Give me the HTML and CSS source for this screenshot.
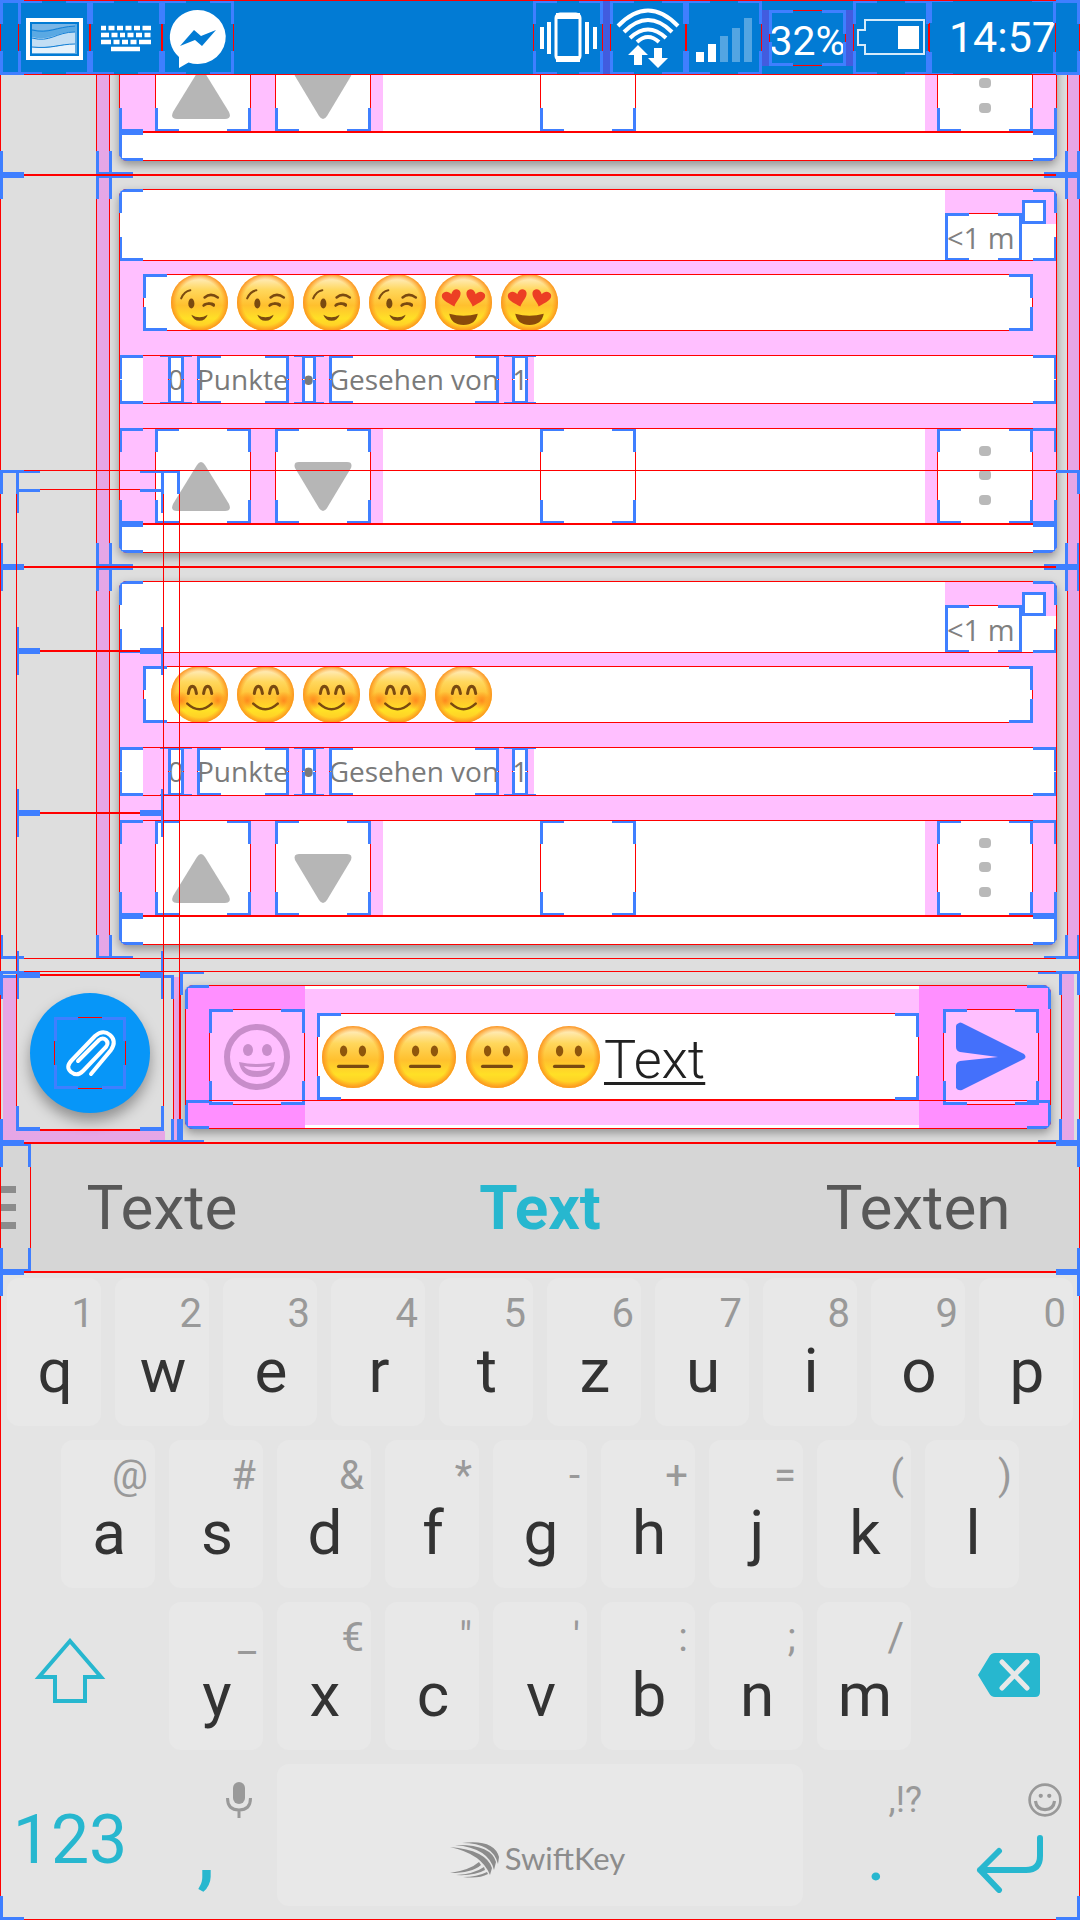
FILE: index.html
```html
<!DOCTYPE html>
<html lang="de">
<head>
<meta charset="utf-8">
<meta name="viewport" content="width=device-width, initial-scale=1">
<title>Chat</title>
<link rel="stylesheet" href="styles.css">
</head>
<body>
<svg class="sprite" aria-hidden="true">
  <defs>
    <linearGradient id="skin" x1="0" y1="0" x2="0" y2="1">
      <stop offset="0" stop-color="#fff3dc"/><stop offset=".28" stop-color="#ffd75c"/>
      <stop offset=".55" stop-color="#ffc02e"/><stop offset=".78" stop-color="#ffe026"/><stop offset="1" stop-color="#ffc526"/>
    </linearGradient>
    <radialGradient id="rim"><stop offset=".8" stop-color="#ff9a1e" stop-opacity="0"/><stop offset="1" stop-color="#fb9420"/></radialGradient>
    <radialGradient id="blush"><stop offset="0" stop-color="#ff7a1a" stop-opacity=".8"/><stop offset="1" stop-color="#ff7a1a" stop-opacity="0"/></radialGradient>
    <symbol id="face" viewBox="0 0 56 56"><circle cx="28" cy="28" r="28" fill="url(#skin)"/><circle cx="28" cy="28" r="28" fill="url(#rim)"/></symbol>
    <symbol id="wink" viewBox="0 0 56 56">
      <use href="#face"/>
      <g fill="none" stroke="#7a4a10" stroke-linecap="round"><path d="M10 24q3-7 9-8" stroke-width="2"/><path d="M33 23q6-5 13 0" stroke-width="2.500"/><path d="M32 31q5-4 10 0M33 30q6-2 9 0" stroke-width="2.500"/></g>
      <ellipse cx="20" cy="29" rx="3" ry="5" fill="#7a4a10"/>
      <path d="M20 40q8 5 16 0q-2 6-8 6t-8-6z" fill="#7a4a10"/>
    </symbol>
    <symbol id="hearts" viewBox="0 0 56 56">
      <use href="#face"/>
      <g fill="#ec3f24"><path d="M19 32C12 28 5 25 7 20c2-4 7-3 9 0 1-5 7-7 9-2 1 5-4 8-6 14z"/><path d="M37 32C44 28 51 25 49 20c-2-4-7-3-9 0-1-5-7-7-9-2-1 5 4 8 6 14z"/></g>
      <path d="M14 39q14 4 28 0q-2 11-14 11T14 39z" fill="#8a4b0a"/>
    </symbol>
    <symbol id="blushing" viewBox="0 0 56 56">
      <use href="#face"/>
      <circle cx="10" cy="34" r="9" fill="url(#blush)"/><circle cx="46" cy="34" r="9" fill="url(#blush)"/>
      <g fill="none" stroke="#7a4a10" stroke-linecap="round"><path d="M17 27q1-7 4-7t4 7M32 27q1-7 4-7t4 7" stroke-width="3"/><path d="M16 37q12 11 24 0" stroke-width="2.500"/></g>
    </symbol>
    <symbol id="neutral" viewBox="0 0 56 56">
      <use href="#face"/>
      <ellipse cx="19.500" cy="22.500" rx="3.300" ry="5" fill="#8f560c"/><ellipse cx="36.500" cy="22.500" rx="3.300" ry="5" fill="#8f560c"/>
      <path d="M15 36.500h26" stroke="#7a4a10" stroke-width="3" stroke-linecap="round"/>
    </symbol>
    <symbol id="up" viewBox="0 0 96 96"><path d="M42 37L18 76q-3 7 4 7h48q7 0 4-7L50 37q-4-6-8 0z" fill="#b6b6b6"/></symbol>
    <symbol id="down" viewBox="0 0 96 96"><path d="M20 40l24 40q4 6 8 0l24-40q2-6-4-6H24q-6 0-4 6z" fill="#b6b6b6"/></symbol>
    <symbol id="more" viewBox="0 0 96 96"><g fill="#b9b9b9"><rect x="42" y="18" width="12" height="10" rx="4"/><rect x="42" y="42" width="12" height="10" rx="4"/><rect x="42" y="67" width="12" height="10" rx="4"/></g></symbol>
  </defs>
</svg>

<div class="screen">
  <header class="status bounds">
    <div class="status-left">
      <span class="slot bounds"><svg viewBox="0 0 72 75" role="img" aria-label="Screenshot"><path d="M10 20h53v38H10z" fill="none" stroke="#fff" stroke-width="4"/><path d="M14 24h45v30H14z" fill="#fff" opacity=".35"/><path d="M14 29c17 4 24-3 43-3v-2H14z" fill="#7ab6e6"/><path d="M14 37c18 5 25-6 43-5v12c-17 0-22 4-43 3z" fill="#c2def4"/><path d="M14 47c18 3 28-3 43-3v9H14z" fill="#e6f2fb"/><path d="M13 23h47v32H13z" fill="none" stroke="#027bd4" stroke-width="2"/><path d="M14 30c17 4 24-3 43-4M14 38c18 5 24-6 43-6M14 47c20 2 28-3 43-3" fill="none" stroke="#1480d6"/></svg></span>
      <span class="slot bounds"><svg viewBox="0 0 72 75" role="img" aria-label="Tastatur"><g stroke="#fff" stroke-width="4.500"><path d="M11 28h50" stroke-dasharray="5 2.500 6 2.500 6 2.500 6 2.500 6 2.500 9"/><path d="M11 35h50" stroke-dasharray="8 2.500 6 2.500 5 2.500 6 2.500 6 2.500 6"/><path d="M11 42h50" stroke-dasharray="10 2.500 6 2.500 6 2.500 6 2.500 12"/><path d="M21 49h29"/></g></svg></span>
      <span class="slot bounds"><svg viewBox="0 0 72 75" role="img" aria-label="Messenger"><path d="M35.500 10a28 27 0 1 1-9 52.500L17 68V57A28 27 0 0 1 35.500 10z" fill="#fff"/><path d="M18 46l14-16 7 6 15-6-14 16-7-6z" fill="#027bd4"/></svg></span>
    </div>
    <div class="status-right">
      <span class="slot vibrate bounds"><svg viewBox="0 0 70 75" role="img" aria-label="Vibration"><rect x="23" y="14" width="24" height="46" rx="4" fill="none" stroke="#fff" stroke-width="3"/><path d="M23 16h24M23 59h24" stroke="#fff" stroke-width="6"/><path d="M9 27v22M16 22v32M54 22v32M62 27v22" stroke="#fff" stroke-width="4"/></svg></span>
      <span class="slot spaced bounds"><svg viewBox="0 0 76 75" role="img" aria-label="WLAN"><g fill="none" stroke="#fff" stroke-width="4"><path d="M8 26q30-31 60 0M14 32q24-24 48 0M20 38q18-17 36 0M27 42q11-10 22 0"/></g><path d="M28 45l10 10h-6v10h-8V55h-6zM48 68L38 58h6V48h8v10h6z" fill="#fff"/></svg></span>
      <span class="slot bounds"><svg viewBox="0 0 76 75" role="img" aria-label="Signal"><path d="M10 52h8v10h-8zM22 44h8v18h-8z" fill="#fff"/><path d="M34 36h8v26h-8zM46 28h8v34h-8zM58 18h8v44h-8z" fill="#fff" opacity=".32"/></svg></span>
      <span class="percent bounds">32%</span>
      <span class="slot bounds"><svg viewBox="0 0 76 75" role="img" aria-label="Akku"><path d="M12 20h59v34H12v-9H5V30h7z" fill="none" stroke="#d6ebfa" stroke-width="2"/><path d="M45 26h21v23H45z" fill="#fff"/></svg></span>
      <time class="clock bounds">14:57</time>
    </div>
  </header>

  <main class="timeline">
    <article class="message bounds">
      <div class="column bounds">
        <div class="card">
          <div class="body bounds">
            <div class="actions bounds">
              <div class="votes">
                <button class="action bounds" aria-label="Positiv"><svg><use href="#up"/></svg></button>
                <button class="action bounds" aria-label="Negativ"><svg><use href="#down"/></svg></button>
              </div>
              <button class="action bounds" aria-label="Teilen"></button>
              <div class="menu"><button class="action bounds" aria-label="Mehr"><svg><use href="#more"/></svg></button></div>
            </div>
          </div>
          <div class="foot bounds"></div>
        </div>
      </div>
    </article>

    <article class="message bounds">
      <div class="column bounds">
        <div class="card">
          <div class="body bounds">
            <div class="head bounds"><div class="stamp"><time class="age bounds">&lt;1 m</time><span class="state"></span></div></div>
            <div class="emojis bounds">
              <svg role="img" aria-label="😉"><use href="#wink"/></svg><svg role="img" aria-label="😉"><use href="#wink"/></svg><svg role="img" aria-label="😉"><use href="#wink"/></svg><svg role="img" aria-label="😉"><use href="#wink"/></svg><svg role="img" aria-label="😍"><use href="#hearts"/></svg><svg role="img" aria-label="😍"><use href="#hearts"/></svg>
            </div>
            <div class="meta bounds"><div class="facts"><span class="narrow bounds">0</span><span class="bounds">Punkte</span><span class="narrow dot bounds">•</span><span class="bounds">Gesehen von</span><span class="narrow bounds">1</span></div></div>
            <div class="actions bounds">
              <div class="votes">
                <button class="action bounds" aria-label="Positiv"><svg><use href="#up"/></svg></button>
                <button class="action bounds" aria-label="Negativ"><svg><use href="#down"/></svg></button>
              </div>
              <button class="action bounds" aria-label="Teilen"></button>
              <div class="menu"><button class="action bounds" aria-label="Mehr"><svg><use href="#more"/></svg></button></div>
            </div>
          </div>
          <div class="foot bounds"></div>
        </div>
      </div>
    </article>

    <article class="message bounds">
      <div class="column bounds">
        <div class="card">
          <div class="body bounds">
            <div class="head bounds"><div class="stamp"><time class="age bounds">&lt;1 m</time><span class="state"></span></div></div>
            <div class="emojis bounds">
              <svg role="img" aria-label="😊"><use href="#blushing"/></svg><svg role="img" aria-label="😊"><use href="#blushing"/></svg><svg role="img" aria-label="😊"><use href="#blushing"/></svg><svg role="img" aria-label="😊"><use href="#blushing"/></svg><svg role="img" aria-label="😊"><use href="#blushing"/></svg>
            </div>
            <div class="meta bounds"><div class="facts"><span class="narrow bounds">0</span><span class="bounds">Punkte</span><span class="narrow dot bounds">•</span><span class="bounds">Gesehen von</span><span class="narrow bounds">1</span></div></div>
            <div class="actions bounds">
              <div class="votes">
                <button class="action bounds" aria-label="Positiv"><svg><use href="#up"/></svg></button>
                <button class="action bounds" aria-label="Negativ"><svg><use href="#down"/></svg></button>
              </div>
              <button class="action bounds" aria-label="Teilen"></button>
              <div class="menu"><button class="action bounds" aria-label="Mehr"><svg><use href="#more"/></svg></button></div>
            </div>
          </div>
          <div class="foot bounds"></div>
        </div>
      </div>
    </article>
  </main>

  <section class="composer bounds">
    <div class="attach">
      <div class="attach-box bounds">
        <button class="fab" aria-label="Anhang"><span class="fab-icon bounds"><svg viewBox="0 0 72 72"><path d="M24 43l21-21q4-3 7 0t0 7L29 53q-6 6-12 1t1-12l23-24q8-7 15-1t1 15L37 56" transform="translate(0 1)" fill="none" stroke="#fff" stroke-width="4" stroke-linecap="round"/></svg></span></button>
      </div>
    </div>
    <div class="entry bounds">
      <form class="entry-card bounds">
        <div class="tool tool-left"><button type="button" class="action bounds" aria-label="Emoji"><svg viewBox="0 0 96 96"><circle cx="48" cy="48" r="30" fill="none" stroke="#c88dca" stroke-width="6"/><ellipse cx="39" cy="41" rx="5" ry="6" fill="#c88dca"/><ellipse cx="58" cy="41" rx="5" ry="6" fill="#c88dca"/><path d="M30 53q18 4 36 0q-2 15-18 15T30 53zM35 57q3 5 13 5t14-5q-13 2-27 0z" fill="#c88dca" fill-rule="evenodd"/></svg></button></div>
        <div class="field bounds">
          <svg role="img" aria-label="😐"><use href="#neutral"/></svg><svg role="img" aria-label="😐"><use href="#neutral"/></svg><svg role="img" aria-label="😐"><use href="#neutral"/></svg><svg role="img" aria-label="😐"><use href="#neutral"/></svg>
          <input class="draft" type="text" value="Text" aria-label="Nachricht">
        </div>
        <div class="tool tool-right"><button type="submit" class="action bounds" aria-label="Senden"><svg viewBox="0 0 96 96"><path d="M16 14q1-1 3 0l62 31q3 3 0 5L19 81q-4 1-6-2V57q0-4 4-5l38-4-38-5q-4-1-4-5V17q0-2 3-3z" fill="#4470fb"/></svg></button></div>
        <div class="entry-foot bounds"></div>
      </form>
    </div>
    <div class="entry-margin"></div>
    <div class="popup bounds">
      <div class="popup-column bounds">
        <ul class="popup-list bounds"><li class="bounds"></li><li class="bounds"></li><li class="bounds"></li><li class="popup-last bounds"></li></ul>
      </div>
    </div>
  </section>

  <section class="suggestions bounds">
    <button class="drawer bounds" aria-label="Menü"><span></span><span></span><span></span></button>
    <button class="word">Texte</button>
    <button class="word word-main">Text</button>
    <button class="word">Texten</button>
  </section>

  <section class="keyboard bounds">
    <div class="keys">
      <button class="key"><span class="hint">1</span><span class="letter">q</span></button>
      <button class="key"><span class="hint">2</span><span class="letter">w</span></button>
      <button class="key"><span class="hint">3</span><span class="letter">e</span></button>
      <button class="key"><span class="hint">4</span><span class="letter">r</span></button>
      <button class="key"><span class="hint">5</span><span class="letter">t</span></button>
      <button class="key"><span class="hint">6</span><span class="letter">z</span></button>
      <button class="key"><span class="hint">7</span><span class="letter">u</span></button>
      <button class="key"><span class="hint">8</span><span class="letter">i</span></button>
      <button class="key"><span class="hint">9</span><span class="letter">o</span></button>
      <button class="key"><span class="hint">0</span><span class="letter">p</span></button>
    </div>
    <div class="keys">
      <span class="half"></span>
      <button class="key"><span class="hint">@</span><span class="letter">a</span></button>
      <button class="key"><span class="hint">#</span><span class="letter">s</span></button>
      <button class="key"><span class="hint">&amp;</span><span class="letter">d</span></button>
      <button class="key"><span class="hint">*</span><span class="letter">f</span></button>
      <button class="key"><span class="hint">-</span><span class="letter">g</span></button>
      <button class="key"><span class="hint">+</span><span class="letter">h</span></button>
      <button class="key"><span class="hint">=</span><span class="letter">j</span></button>
      <button class="key"><span class="hint">(</span><span class="letter">k</span></button>
      <button class="key"><span class="hint">)</span><span class="letter">l</span></button>
    </div>
    <div class="keys">
      <button class="key wide plain wide-left" aria-label="Umschalt"><svg class="shift" viewBox="0 0 72 66"><path d="M36 3l31 36H51v24H21V39H5z" fill="none" stroke="#27b7cf" stroke-width="4"/></svg></button>
      <button class="key"><span class="hint">_</span><span class="letter">y</span></button>
      <button class="key"><span class="hint">€</span><span class="letter">x</span></button>
      <button class="key"><span class="hint">"</span><span class="letter">c</span></button>
      <button class="key"><span class="hint">'</span><span class="letter">v</span></button>
      <button class="key"><span class="hint">:</span><span class="letter">b</span></button>
      <button class="key"><span class="hint">;</span><span class="letter">n</span></button>
      <button class="key"><span class="hint">/</span><span class="letter">m</span></button>
      <button class="key wide plain wide-right" aria-label="Löschen"><svg class="erase" viewBox="0 0 62 44"><path d="M17 0h40q5 0 5 5v34q0 5-5 5H17q-4 0-6-4L0 22 11 4q2-4 6-4z" fill="#27b7cf"/><path d="M24 9l25 26M49 9L24 35" stroke="#e8e8e8" stroke-width="5" stroke-linecap="round"/></svg></button>
    </div>
    <div class="keys bottom">
      <button class="key plain digits">123</button>
      <button class="key plain"><span class="hint"><svg class="mic" viewBox="0 0 26 36"><rect x="7" y="0" width="12" height="22" rx="6" fill="#999"/><path d="M1.500 16q0 12 11.500 12t11.500-12M13 28v8" fill="none" stroke="#999" stroke-width="3"/></svg></span><span class="letter punct">,</span></button>
      <button class="key space" aria-label="Leertaste"><svg class="swift" viewBox="0 0 50 36"><g fill="#8c8c8c"><path d="M12 1q32-4 37 14l-1 7Q43 1 12 1z"/><path d="M5 3q36-1 41 17l-2 8Q39 6 5 3z"/><path d="M0 5q36 3 42 21l-2 7Q32 12 0 5z"/><path d="M0 31q20-3 29-11l2 3Q22 31 0 31z"/><path d="M6 33q18-1 28-8l1 3q-10 6-29 5z"/><path d="M13 35q14 0 24-5l1 2q-9 5-25 3z"/></g></svg><span>SwiftKey</span></button>
      <button class="key plain"><span class="hint small">,!?</span><span class="letter stop">.</span></button>
      <button class="key plain" aria-label="Eingabe"><span class="hint"><svg class="smiley" viewBox="0 0 32 32"><g fill="none" stroke="#999" stroke-width="2.500"><circle cx="16" cy="16" r="14.500"/><path d="M7 17q1 8 9 8t9-8" stroke-width="3"/></g><circle cx="12" cy="12" r="2" fill="#999"/><circle cx="20" cy="12" r="2" fill="#999"/></svg></span><svg class="enter" viewBox="0 0 68 58"><path d="M64 3v18q0 14-14 14H4M23 16L4 35l19 20" fill="none" stroke="#27b7cf" stroke-width="6" stroke-linecap="round" stroke-linejoin="round"/></svg></button>
    </div>
  </section>
</div>
</body>
</html>
```
FILE: styles.css
```css
:root {
  --margin: rgba(255, 0, 255, 0.25);
  --pink: #ffbfff;
  --hot: #ff8fff;
  --line: #ff0000;
  --tick: #3f7fff;
  --teal: #27b7cf;
}

* { box-sizing: border-box; }

body {
  margin: 0;
  font-family: Roboto, "Liberation Sans", sans-serif;
  background: #dedede;
}

button {
  display: block;
  margin: 0;
  padding: 0;
  border: 0;
  background: none;
  font: inherit;
  color: inherit;
}

svg { display: block; }
.sprite { position: absolute; width: 0; height: 0; }

.screen {
  display: flex;
  flex-direction: column;
  height: 100vh;
  overflow: hidden;
}

/* Layout bounds: thin outline plus corner ticks */
.bounds { position: relative; }
.bounds::after,
.message::before,
.attach::before {
  content: "";
  position: absolute;
  inset: 0;
  pointer-events: none;
  background-image:
    linear-gradient(var(--tick), var(--tick)), linear-gradient(var(--tick), var(--tick)),
    linear-gradient(var(--tick), var(--tick)), linear-gradient(var(--tick), var(--tick)),
    linear-gradient(var(--tick), var(--tick)), linear-gradient(var(--tick), var(--tick)),
    linear-gradient(var(--tick), var(--tick)), linear-gradient(var(--tick), var(--tick)),
    linear-gradient(var(--line), var(--line)), linear-gradient(var(--line), var(--line)),
    linear-gradient(var(--line), var(--line)), linear-gradient(var(--line), var(--line));
  background-repeat: no-repeat;
  background-position:
    0 0, 0 0, 100% 0, 100% 0, 0 100%, 0 100%, 100% 100%, 100% 100%,
    0 0, 0 100%, 0 0, 100% 0;
  background-size:
    24px 3px, 3px 24px, 24px 3px, 3px 24px, 24px 3px, 3px 24px, 24px 3px, 3px 24px,
    100% 1px, 100% 1px, 1px 100%, 1px 100%;
}
.message::before { left: 96px; }
.narrow::before {
  content: "";
  position: absolute;
  inset: 0 -8px;
  border: solid var(--tick);
  border-width: 2px 0;
}

/* Status bar */
.status {
  display: flex;
  justify-content: space-between;
  flex: none;
  height: 75px;
  padding: 0 24px 0 18px;
  background: #027bd4;
  color: #fff;
}
.status-left, .status-right { display: flex; align-items: center; }
.status-right { padding-left: 12px; }
.slot { width: 76px; height: 75px; }
.status-left .slot { width: 72px; }
.vibrate { width: 70px; }
.slot svg { width: 100%; height: 100%; }
.spaced { margin-left: 7px; }
.spaced::before {
  content: "";
  position: absolute;
  inset: 0 100% 0 -7px;
  background: var(--margin);
}
.percent {
  width: 77px;
  height: 56px;
  margin: 0 7px;
  font-size: 41px;
  line-height: 62px;
  text-align: center;
  box-shadow: -7px 0 #425cdf, 7px 0 #425cdf;
}
.clock {
  width: 127px;
  font-size: 43px;
  line-height: 77px;
  text-align: right;
}

/* Message list */
.timeline {
  display: flex;
  flex: 1;
  flex-direction: column;
  justify-content: flex-end;
  min-height: 0;
  padding-bottom: 12px;
  overflow: hidden;
}
.message {
  flex: none;
  padding: 0 12px 0 109px;
  background:
    linear-gradient(var(--margin), var(--margin)) 96px 0 / 13px 100% no-repeat,
    linear-gradient(var(--margin), var(--margin)) 100% 0 / 12px 100% no-repeat;
}
.column { padding: 14px 11px 14px 10px; }
.card {
  overflow: hidden;
  border-radius: 8px;
  background: #fff;
  box-shadow: 0 4px 10px rgba(0, 0, 0, 0.35);
}
.body { background: var(--pink); }
.head {
  display: flex;
  justify-content: flex-end;
  height: 72px;
  margin-bottom: 13px;
  background: #fff;
}
.stamp {
  display: flex;
  padding-right: 11px;
  background: linear-gradient(var(--pink), var(--pink)) 0 0 / 100% 35px no-repeat;
}
.age {
  width: 77px;
  height: 48px;
  margin-top: 24px;
  padding-left: 2px;
  background: #fff;
  color: #808080;
  font: 400 29px/50px "Open Sans", sans-serif;
}
.state {
  width: 24px;
  height: 24px;
  margin-top: 11px;
  border: 3px solid var(--tick);
  background: #fff;
}
.emojis {
  display: flex;
  gap: 9px;
  height: 57px;
  margin: 0 24px 24px;
  padding-left: 28px;
  background: #fff;
}
.emojis svg { width: 57px; height: 57px; }
.meta {
  display: flex;
  margin-bottom: 24px;
  padding-left: 24px;
  background: #fff;
}
.facts {
  display: flex;
  gap: 13px;
  padding: 0 6px 0 25px;
  background: var(--pink);
  color: #7a7a7a;
  font: 400 28px/49px "Open Sans", sans-serif;
}
.facts span { background: #fff; }
.facts .dot {
  display: flex;
  justify-content: center;
  width: 14px;
  height: 49px;
  font-size: 40px;
}
.actions {
  display: grid;
  grid-template-columns: 1fr auto 1fr;
  background: #fff;
}
.votes {
  display: flex;
  gap: 24px;
  justify-self: start;
  padding: 0 12px 0 36px;
  background: var(--pink);
}
.menu {
  justify-self: end;
  padding: 0 24px 0 12px;
  background: var(--pink);
}
.action { width: 96px; height: 96px; background: #fff; }
.action svg { width: 96px; height: 96px; }
.foot { height: 29px; }

/* Composer */
.composer {
  display: flex;
  flex: none;
  height: 172px;
}
.attach {
  position: relative;
  flex: none;
  width: 180px;
  padding: 3px 0 0 16px;
  background:
    linear-gradient(var(--margin), var(--margin)) 3px 6px / 13px 100% no-repeat,
    linear-gradient(var(--margin), var(--margin)) 16px 100% / 149px 12px no-repeat,
    linear-gradient(var(--margin), var(--margin)) 174px 6px / 6px 100% no-repeat;
}
.attach::before { inset: 4px 6px 0 0; }
.attach-box {
  width: 148px;
  height: 157px;
  padding: 19px 14px;
}
.fab {
  display: grid;
  place-items: center;
  width: 120px;
  height: 120px;
  border-radius: 50%;
  background: #0796f8;
  box-shadow: 0 8px 14px rgba(0, 0, 0, 0.35);
}
.fab-icon { width: 72px; height: 72px; }
.fab-icon svg { width: 72px; height: 72px; }
.entry { flex: 1; min-width: 0; padding: 14px 11px 14px 5px; }
.entry-card {
  display: flex;
  height: 144px;
  overflow: hidden;
  border-radius: 8px;
  background: linear-gradient(var(--pink), var(--pink)) 0 4px / 100% 136px no-repeat #fff;
  box-shadow: 0 4px 10px rgba(0, 0, 0, 0.35);
}
.tool { flex: none; padding: 24px 0; background: var(--hot); }
.tool-left { padding-left: 24px; }
.tool-right { padding: 24px 12px 24px 24px; }
.tool .action { background: var(--pink); }
.field {
  display: flex;
  flex: 1;
  align-items: center;
  gap: 10px;
  min-width: 0;
  height: 87px;
  margin: 28px 0 0 12px;
  padding-left: 5px;
  background: #fff;
}
.field svg { flex: none; width: 62px; height: 62px; }
.draft {
  flex: 1;
  min-width: 0;
  height: 80px;
  margin: 0 3px 0 -6px;
  padding: 6px 0 0;
  border: 0;
  outline: 0;
  background: none;
  color: #212121;
  font: 300 54px/64px Roboto, sans-serif;
  text-decoration: underline 3px;
  text-underline-offset: 4px;
}
.entry-foot {
  position: absolute;
  inset: auto 0 0;
  height: 29px;
}
.entry-margin {
  flex: none;
  width: 18px;
  background: linear-gradient(var(--margin), var(--margin)) 0 3px / 12px 168px no-repeat;
}

/* Attachment popup that reaches up over the list */
.popup {
  position: absolute;
  right: 0;
  bottom: 0;
  left: 0;
  height: 673px;
  pointer-events: none;
}
.popup-column { width: 180px; height: 100%; padding: 0 16px; }
.popup-list {
  height: 660px;
  margin: 0;
  padding: 19px 0 0;
  list-style: none;
}
.popup-list li { height: 162px; }
.popup-list .popup-last { height: 155px; }

/* Suggestions */
.suggestions {
  display: grid;
  grid-template-columns: 3fr 4fr 3fr;
  flex: none;
  height: 129px;
  background: #d6d6d6;
  color: #585858;
  font-size: 62px;
}
.drawer {
  position: absolute;
  top: 0;
  left: 0;
  display: flex;
  flex-direction: column;
  justify-content: center;
  gap: 11px;
  width: 31px;
  height: 129px;
}
.drawer span { width: 16px; height: 7px; background: #8c8c8c; }
.word-main { color: var(--teal); font-weight: 700; }

/* Keyboard */
.keyboard { flex: none; background: #e4e4e4; }
.keys {
  display: grid;
  grid-template-columns: repeat(20, 1fr);
  height: 162px;
  padding: 6px 0 8px;
}
.key {
  display: flex;
  flex-direction: column;
  grid-column: span 2;
  min-width: 0;
  margin: 0 7px;
  padding-top: 13px;
  border-radius: 12px;
  background: #e8e8e8;
  color: #333;
}
.wide { grid-column: span 3; }
.plain { background: none; }
.hint {
  display: flex;
  align-items: center;
  align-self: flex-end;
  height: 46px;
  padding-right: 7px;
  color: #999;
  font-size: 40px;
  line-height: 46px;
}
.letter {
  align-self: center;
  padding-left: 2px;
  font-size: 62px;
  line-height: 68px;
}
.wide { align-items: center; justify-content: center; padding: 0; }
.wide-left { padding: 0 22px 10px 0; }
.wide-right { padding: 0 0 2px 20px; }
.shift { width: 72px; height: 66px; }
.erase { width: 62px; height: 44px; }
.bottom {
  grid-template-columns: 14fr 13fr 54fr 13fr 14fr;
  padding-bottom: 14px;
}
.bottom .key { grid-column: auto; }
.bottom .hint { padding-right: 11px; }
.bottom .small { font-size: 36px; }
.digits {
  align-items: center;
  padding-top: 36px;
  color: var(--teal);
  font-size: 68px;
  line-height: 80px;
}
.punct, .stop { color: var(--teal); font-weight: 500; }
.punct { font-size: 80px; line-height: 58px; }
.stop { line-height: 72px; }
.mic { width: 26px; height: 36px; }
.smiley { width: 34px; height: 34px; }
.enter { align-self: center; width: 68px; height: 58px; margin-top: 12px; }
.bottom .space {
  flex-direction: row;
  align-items: flex-end;
  justify-content: center;
  gap: 5px;
  padding: 0 5px 28px 0;
  color: #8c8c8c;
  font: 400 31px/40px Lato, sans-serif;
}
.swift { width: 50px; height: 36px; }
```
